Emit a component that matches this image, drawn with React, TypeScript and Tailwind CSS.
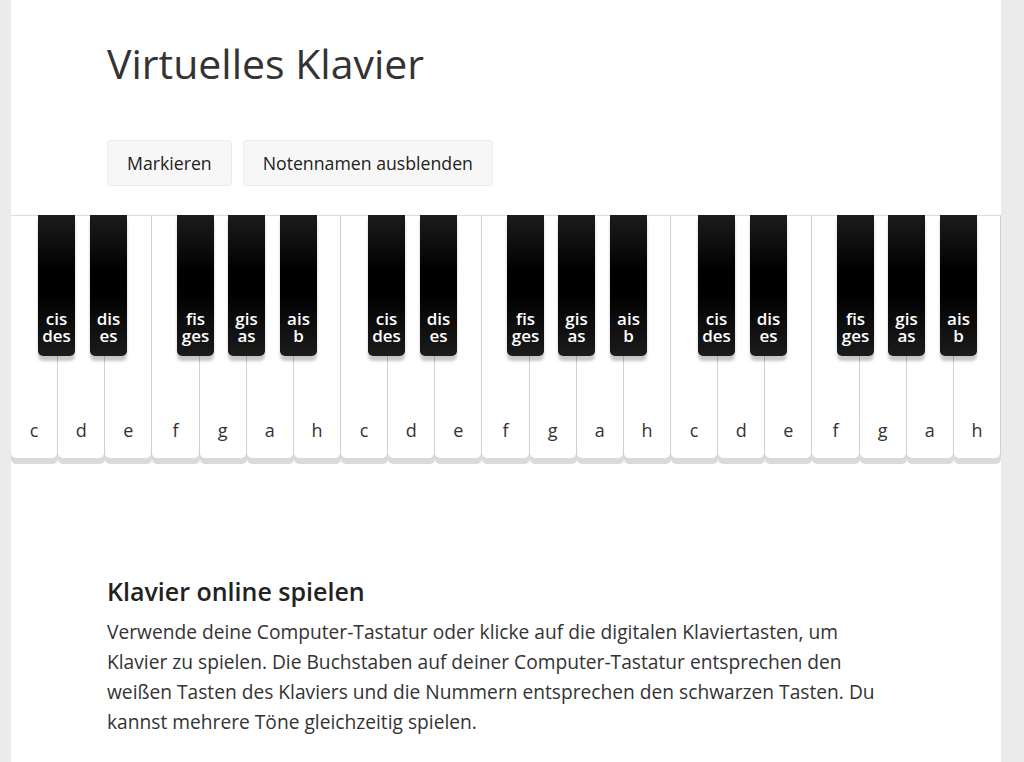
import React from "react";

const whites = ["c", "d", "e", "f", "g", "a", "h"];
const blacks = [
  { top: "cis", bot: "des", cls: "left-[27px]" },
  { top: "dis", bot: "es", cls: "left-[79px]" },
  { top: "fis", bot: "ges", cls: "left-[166px]" },
  { top: "gis", bot: "as", cls: "left-[217px]" },
  { top: "ais", bot: "b", cls: "left-[269px]" },
];

function Octave() {
  return (
    <div className="relative flex w-[330px] h-[242px]">
      {whites.map((w) => (
        <div
          key={w}
          className="flex-1 h-full bg-white border-r border-[#cfcfcf] rounded-b-[5px] shadow-[0_6px_0_#dadada] flex items-end justify-center pb-[14px] text-[18px] text-[#333]"
        >
          {w}
        </div>
      ))}
      {blacks.map((b) => (
        <div
          key={b.top}
          className={`absolute top-[-1px] ${b.cls} w-[37px] h-[141px] rounded-b-[5px] bg-[linear-gradient(to_bottom,#1c1c1c_0%,#000_40%,#000_55%,#1b1b1b_100%)] shadow-[0_5px_3px_rgba(0,0,0,0.22)] flex flex-col items-center justify-end pb-[12px] text-white font-semibold text-[17px] leading-[17px]`}
        >
          <span>{b.top}</span>
          <span>{b.bot}</span>
        </div>
      ))}
    </div>
  );
}

export default function App() {
  return (
    <div
      className="min-h-screen bg-[#ebebeb] flex"
      style={{ fontFamily: '"Open Sans", "Noto Sans", sans-serif' }}
    >
      <div className="w-[11px] shrink-0" />
      <main className="w-[990px] shrink-0 bg-white min-h-[762px]">
        <div className="px-[96px] pt-[37px]">
          <h1 className="text-[41px] leading-[52px] font-normal text-[#333]">
            Virtuelles Klavier
          </h1>
          <div className="mt-[51px] flex gap-[11px]">
            <button className="h-[46px] px-[19px] rounded-[4px] bg-[#f7f7f7] border border-[#ececec] text-[17.7px] text-[#222]">
              Markieren
            </button>
            <button className="h-[46px] px-[19px] rounded-[4px] bg-[#f7f7f7] border border-[#ececec] text-[17.7px] text-[#222]">
              Notennamen ausblenden
            </button>
          </div>
        </div>
        <div className="mt-[29px] border-t border-[#dcdcdc] flex">
          <Octave />
          <Octave />
          <Octave />
        </div>
        <div className="px-[96px] pt-[117px]">
          <h2 className="text-[25px] leading-[32px] font-semibold text-[#222]">
            Klavier online spielen
          </h2>
          <p className="mt-[10px] max-w-[785px] text-[19.2px] leading-[30px] text-[#333]">
            Verwende deine Computer-Tastatur oder klicke auf die digitalen
            Klaviertasten, um Klavier zu spielen. Die Buchstaben auf deiner
            Computer-Tastatur entsprechen den weißen Tasten des Klaviers und die
            Nummern entsprechen den schwarzen Tasten. Du kannst mehrere Töne
            gleichzeitig spielen.
          </p>
        </div>
      </main>
      <div className="flex-1" />
    </div>
  );
}
